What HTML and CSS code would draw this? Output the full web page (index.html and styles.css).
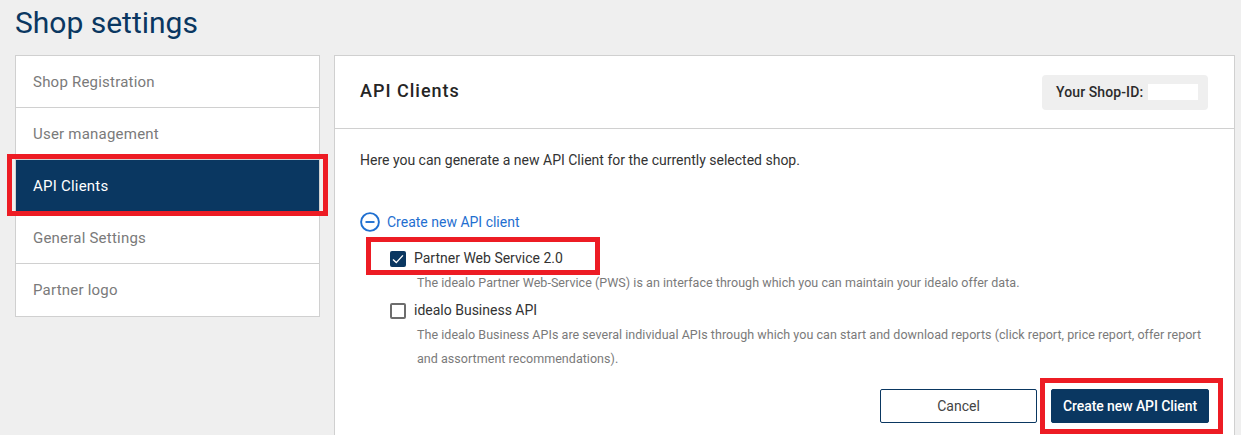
FILE: index.html
```html
<!DOCTYPE html>
<html lang="en">
<head>
<meta charset="utf-8">
<title>Shop settings</title>
<link rel="stylesheet" href="styles.css">
</head>
<body>
<h1 class="page-title">Shop settings</h1>
<div class="layout">
  <nav class="side-nav">
    <a class="nav-item">Shop Registration</a>
    <a class="nav-item">User management</a>
    <a class="nav-item active">API Clients</a>
    <a class="nav-item">General Settings</a>
    <a class="nav-item">Partner logo</a>
  </nav>
  <main class="panel">
    <header class="panel-head">
      <h2 class="panel-title">API Clients</h2>
      <div class="shop-id"><span>Your Shop-ID:</span><span class="shop-id-value"></span></div>
    </header>
    <section class="panel-body">
      <p class="intro">Here you can generate a new API Client for the currently selected shop.</p>
      <div class="toggle">
        <svg class="toggle-icon" width="20" height="20" viewBox="0 0 20 20"><circle cx="10" cy="10" r="8.9" fill="none" stroke="#1f6fd0" stroke-width="1.9"/><path d="M5.5 10h9" stroke="#1f6fd0" stroke-width="1.9"/></svg>
        <span>Create new API client</span>
      </div>
      <div class="option">
        <span class="check checked"><svg width="16" height="16" viewBox="0 0 16 16"><path d="M3 8.4l3.3 3.2 6.6-7.2" fill="none" stroke="#fff" stroke-width="1.4"/></svg></span>
        <span class="option-label">Partner Web Service 2.0</span>
      </div>
      <p class="option-desc">The idealo Partner Web-Service (PWS) is an interface through which you can maintain your idealo offer data.</p>
      <div class="option second">
        <span class="check"></span>
        <span class="option-label">idealo Business API</span>
      </div>
      <p class="option-desc">The idealo Business APIs are several individual APIs through which you can start and download reports (click report, price report, offer report and assortment recommendations).</p>
      <div class="actions">
        <button class="btn btn-outline">Cancel</button>
        <button class="btn btn-primary">Create new API Client</button>
      </div>
    </section>
  </main>
</div>
<div class="mark mark-nav"></div>
<div class="mark mark-option"></div>
<div class="mark mark-button"></div>
</body>
</html>
```

FILE: styles.css
```css
* { box-sizing: border-box; }
html, body { height: 435px; overflow: hidden; }
body {
  margin: 0;
  background: #efefef;
  font-family: Roboto, "Liberation Sans", sans-serif;
  position: relative;
}
.page-title {
  margin: 0;
  padding: 5px 0 0 15px;
  height: 55px;
  font-size: 30px;
  line-height: 36px;
  font-weight: 400;
  color: #0a3761;
}
.layout { display: flex; align-items: flex-start; padding-left: 15px; gap: 14px; }
.side-nav {
  width: 305px;
  background: #fff;
  border: 1px solid #d0d0d0;
  display: flex;
  flex-direction: column;
}
.nav-item {
  height: 52px;
  padding-left: 17px;
  display: flex;
  align-items: center;
  font-size: 15px;
  color: #7a7a7a;
  border-bottom: 1px solid #d0d0d0;
  letter-spacing: 0.22px;
}
.nav-item:last-child { border-bottom: 0; }
.nav-item.active { background: #0a3761; color: #fff; }
.panel {
  width: 901px;
  height: 400px;
  background: #fff;
  border: 1px solid #d0d0d0;
}
.panel-head {
  height: 73px;
  display: flex;
  align-items: center;
  justify-content: space-between;
  padding: 0 26px 0 25px;
  border-bottom: 1px solid #d0d0d0;
}
.panel-title {
  margin: 0;
  font-size: 18px;
  font-weight: 500;
  color: #252525;
  letter-spacing: 1px;
  position: relative;
  top: -2px;
}
.shop-id {
  width: 166px;
  height: 35px;
  background: #efefef;
  border-radius: 4px;
  display: flex;
  align-items: center;
  padding-left: 14px;
  gap: 5px;
  font-size: 14px;
  font-weight: 500;
  letter-spacing: 0.1px;
  color: #2b2b2b;
}
.shop-id-value { width: 50px; height: 16px; background: #fff; }
.panel-body { padding: 22px 25px 0; }
.intro { margin: 0; font-size: 14px; line-height: 18px; color: #333; }
.toggle {
  margin-top: 43px;
  display: flex;
  align-items: center;
  gap: 7px;
  height: 20px;
  font-size: 14px;
  color: #1f6fd0;
}
.toggle-icon { flex: none; }
.option {
  margin-top: 16px;
  padding-left: 30px;
  display: flex;
  align-items: center;
  height: 20px;
  gap: 8px;
}
.option.second { margin-top: 5px; }
.option-label { font-size: 14px; color: #333; }
.check {
  width: 16px;
  height: 16px;
  border: 2px solid #6d6d6d;
  border-radius: 2px;
  background: #fff;
  flex: none;
  display: block;
  position: relative;
  top: 1px;
}
.check.checked { border: 0; background: #0a3761; }
.check svg { display: block; }
.option-desc {
  margin: 3px 0 0 57px;
  font-size: 12.5px;
  line-height: 24px;
  letter-spacing: 0.04px;
  color: #7a7a7a;
}
.actions { display: flex; justify-content: flex-end; gap: 14px; margin-top: 18px; }
.btn {
  width: 157px;
  height: 34px;
  padding: 0;
  border-radius: 2px;
  font-family: inherit;
  font-size: 14px;
}
.btn-outline { background: #fff; border: 1px solid #0a3761; color: #444; }
.btn-primary { width: 158px; background: #0a3761; border: 1px solid #0a3761; color: #fff; font-weight: 500; letter-spacing: -0.08px; }
.mark { position: absolute; border: 5px solid #ed1c24; pointer-events: none; }
.mark-nav { left: 7px; top: 154px; width: 321px; height: 62px; }
.mark-option { left: 366px; top: 237px; width: 234px; height: 38px; }
.mark-button { left: 1040px; top: 378px; width: 183px; height: 56px; }
```
